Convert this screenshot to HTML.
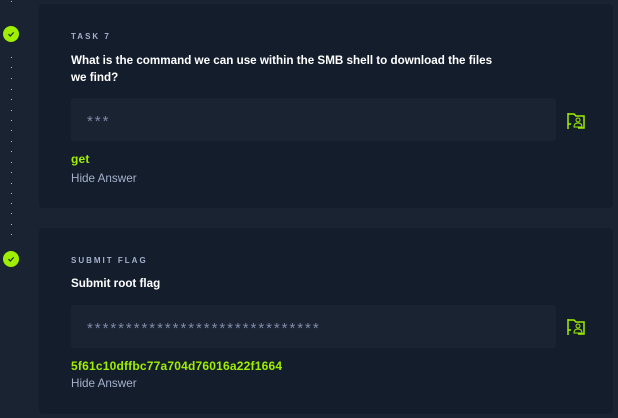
<!DOCTYPE html>
<html><head><style>
body{margin:0;width:618px;height:418px;background:#1a2332;font-family:"Liberation Sans",sans-serif;position:relative;overflow:hidden}
.dot{position:absolute;left:11px;width:1px;height:1px;background:#9fef00}
.chk{position:absolute;left:3px;width:16px;height:16px;border-radius:50%;background:#9fef00}
.card{position:absolute;left:39px;width:574px;background:#141d2b;border-radius:4px}
.lbl{position:absolute;left:32px;font-size:8px;letter-spacing:2px;color:#a4b1cd;font-weight:bold}
.q{position:absolute;left:32px;font-size:11.65px;color:#fff;font-weight:bold;line-height:17px}
.inp{position:absolute;left:32px;width:485px;height:43px;background:#1a2332;border-radius:3px;color:#7d8aa8;font-size:15px;line-height:47px;padding-left:16px;box-sizing:border-box;letter-spacing:1.95px}
.ans{position:absolute;left:32px;font-size:12px;color:#9fef00;font-weight:bold;letter-spacing:0.2px}
.hide{position:absolute;left:32px;font-size:11.7px;color:#a4b1cd}
.flag{position:absolute;left:527px}
</style></head><body>
<div class="chk" style="top:26px"><svg width="16" height="16"><path d="M5.5 8.2l1.8 1.8 3.4-3.6" stroke="#1a2332" stroke-width="1.2" fill="none"/></svg></div>
<div class="chk" style="top:251px"><svg width="16" height="16"><path d="M5.5 8.2l1.8 1.8 3.4-3.6" stroke="#1a2332" stroke-width="1.2" fill="none"/></svg></div>
<div class="card" style="top:4px;height:204px">
<div class="lbl" style="top:28px">TASK 7</div>
<div class="q" style="top:48px">What is the command we can use within the SMB shell to download the files<br>we find?</div>
<div class="inp" style="top:94px">***</div>
<svg class="flag" style="top:108px" width="20" height="18"><path d="M2 1v16M2 2h6l2 2h8v12h-6M2 12h3" stroke="#9fef00" stroke-width="1.5" fill="none"/><circle cx="12" cy="8" r="2" stroke="#9fef00" fill="none"/><path d="M8 15q0-4 4-4t4 4z" stroke="#9fef00" fill="none"/></svg>
<div class="ans" style="top:148px">get</div>
<div class="hide" style="top:168px">Hide Answer</div>
</div>
<div class="card" style="top:228px;height:186px">
<div class="lbl" style="top:28px">SUBMIT FLAG</div>
<div class="q" style="top:47px">Submit root flag</div>
<div class="inp" style="top:77px">******************************</div>
<svg class="flag" style="top:90px" width="20" height="18"><path d="M2 1v16M2 2h6l2 2h8v12h-6M2 12h3" stroke="#9fef00" stroke-width="1.5" fill="none"/><circle cx="12" cy="8" r="2" stroke="#9fef00" fill="none"/><path d="M8 15q0-4 4-4t4 4z" stroke="#9fef00" fill="none"/></svg>
<div class="ans" style="top:131px">5f61c10dffbc77a704d76016a22f1664</div>
<div class="hide" style="top:149px">Hide Answer</div>
</div>
<div style="position:absolute;left:0;top:0">
<div class="dot" style="top:1px"></div><div class="dot" style="top:57px"></div><div class="dot" style="top:67px"></div><div class="dot" style="top:78px"></div><div class="dot" style="top:89px"></div><div class="dot" style="top:99px"></div><div class="dot" style="top:110px"></div><div class="dot" style="top:120px"></div><div class="dot" style="top:130px"></div><div class="dot" style="top:141px"></div><div class="dot" style="top:151px"></div><div class="dot" style="top:162px"></div><div class="dot" style="top:172px"></div><div class="dot" style="top:183px"></div><div class="dot" style="top:193px"></div><div class="dot" style="top:203px"></div><div class="dot" style="top:213px"></div><div class="dot" style="top:224px"></div><div class="dot" style="top:234px"></div>
</div>
</body></html>
